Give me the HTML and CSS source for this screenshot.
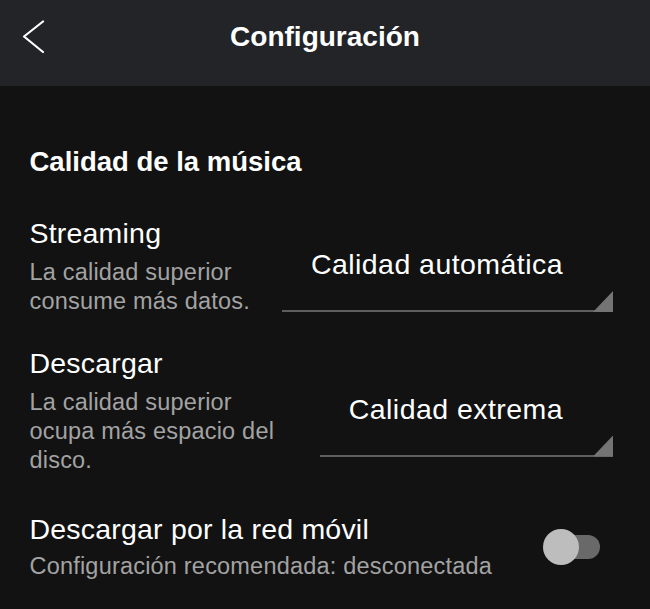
FILE: index.html
```html
<!DOCTYPE html>
<html lang="es">
<head>
  <meta charset="UTF-8">
  <meta name="viewport" content="width=device-width, initial-scale=1.0">
  <title>Configuración</title>
  <link rel="stylesheet" href="styles.css">
</head>
<body>

  <header class="topbar">
    <a class="back" href="#" aria-label="Atrás">
      <svg width="24" height="34" viewBox="0 0 24 34">
        <polyline points="21,1.5 2,16.5 21,32" fill="none" stroke="#fff" stroke-width="2.2" stroke-linecap="round" stroke-linejoin="round"/>
      </svg>
    </a>
    <h1 class="topbar-title">Configuración</h1>
    <span></span>
  </header>

  <main class="settings">
    <h2 class="section-title">Calidad de la música</h2>

    <div class="row row-select">
      <div class="row-text">
        <div class="row-title">Streaming</div>
        <div class="row-desc">La calidad superior consume más datos.</div>
      </div>
      <div class="select">Calidad automática</div>
    </div>

    <div class="row row-select">
      <div class="row-text">
        <div class="row-title">Descargar</div>
        <div class="row-desc">La calidad superior ocupa más espacio del disco.</div>
      </div>
      <div class="select">Calidad extrema</div>
    </div>

    <div class="row row-switch">
      <div class="row-text">
        <div class="row-title">Descargar por la red móvil</div>
        <div class="row-desc">Configuración recomendada: desconectada</div>
      </div>
      <div class="switch"><span class="knob"></span></div>
    </div>
  </main>

</body>
</html>
```

FILE: styles.css
```css
* {
  margin: 0;
  padding: 0;
  box-sizing: border-box;
  font-family: "Liberation Sans", Arial, sans-serif;
}

body {
  background-color: #121212;
  color: #fff;
  min-height: 100vh;
}

.topbar {
  display: grid;
  grid-template-columns: 1fr auto 1fr;
  align-items: start;
  height: 86px;
  padding: 21px 22px 0;
  background-color: #232428;
}

.back {
  display: block;
  width: 24px;
  height: 34px;
  margin-top: -1px;
}

.back svg {
  display: block;
}

.topbar-title {
  font-size: 28px;
  line-height: 32px;
  font-weight: bold;
}

.settings {
  padding: 60px 37px 0 29.5px;
}

.section-title {
  font-size: 27.5px;
  line-height: 32px;
  font-weight: bold;
  margin-bottom: 39px;
}

.row {
  display: flex;
  align-items: center;
  justify-content: space-between;
}

.row + .row {
  margin-top: 31px;
}

.row-switch {
  margin-top: 38px !important;
}

.row-text {
  flex: 1;
  min-width: 0;
}

.row-title {
  font-size: 28.5px;
  line-height: 32px;
  letter-spacing: 0.2px;
  margin-bottom: 9px;
}

.row-switch .row-title {
  margin-bottom: 6.5px;
}

.row-desc {
  font-size: 23.5px;
  line-height: 29px;
  letter-spacing: 0.2px;
  color: #a3a3a3;
}

.row-select .row-desc {
  max-width: 255px;
}

.select {
  position: relative;
  flex: none;
  margin-top: 27px;
  padding: 0 50px 30px 29px;
  font-size: 28.5px;
  line-height: 32px;
  letter-spacing: 0.45px;
  border-bottom: 2px solid #5e5e5e;
}

/* esquina del desplegable */
.select::after {
  content: "";
  position: absolute;
  right: 0;
  bottom: -2px;
  width: 20px;
  height: 21px;
  background-color: #747474;
  clip-path: polygon(100% 0, 100% 100%, 0 100%);
}

.switch {
  position: relative;
  flex: none;
  width: 52px;
  height: 24px;
  margin-right: 13px;
  border-radius: 12px;
  background-color: #696969;
}

.knob {
  position: absolute;
  left: -5px;
  top: -6px;
  width: 36px;
  height: 36px;
  border-radius: 50%;
  background-color: #bdbdbd;
}
```
